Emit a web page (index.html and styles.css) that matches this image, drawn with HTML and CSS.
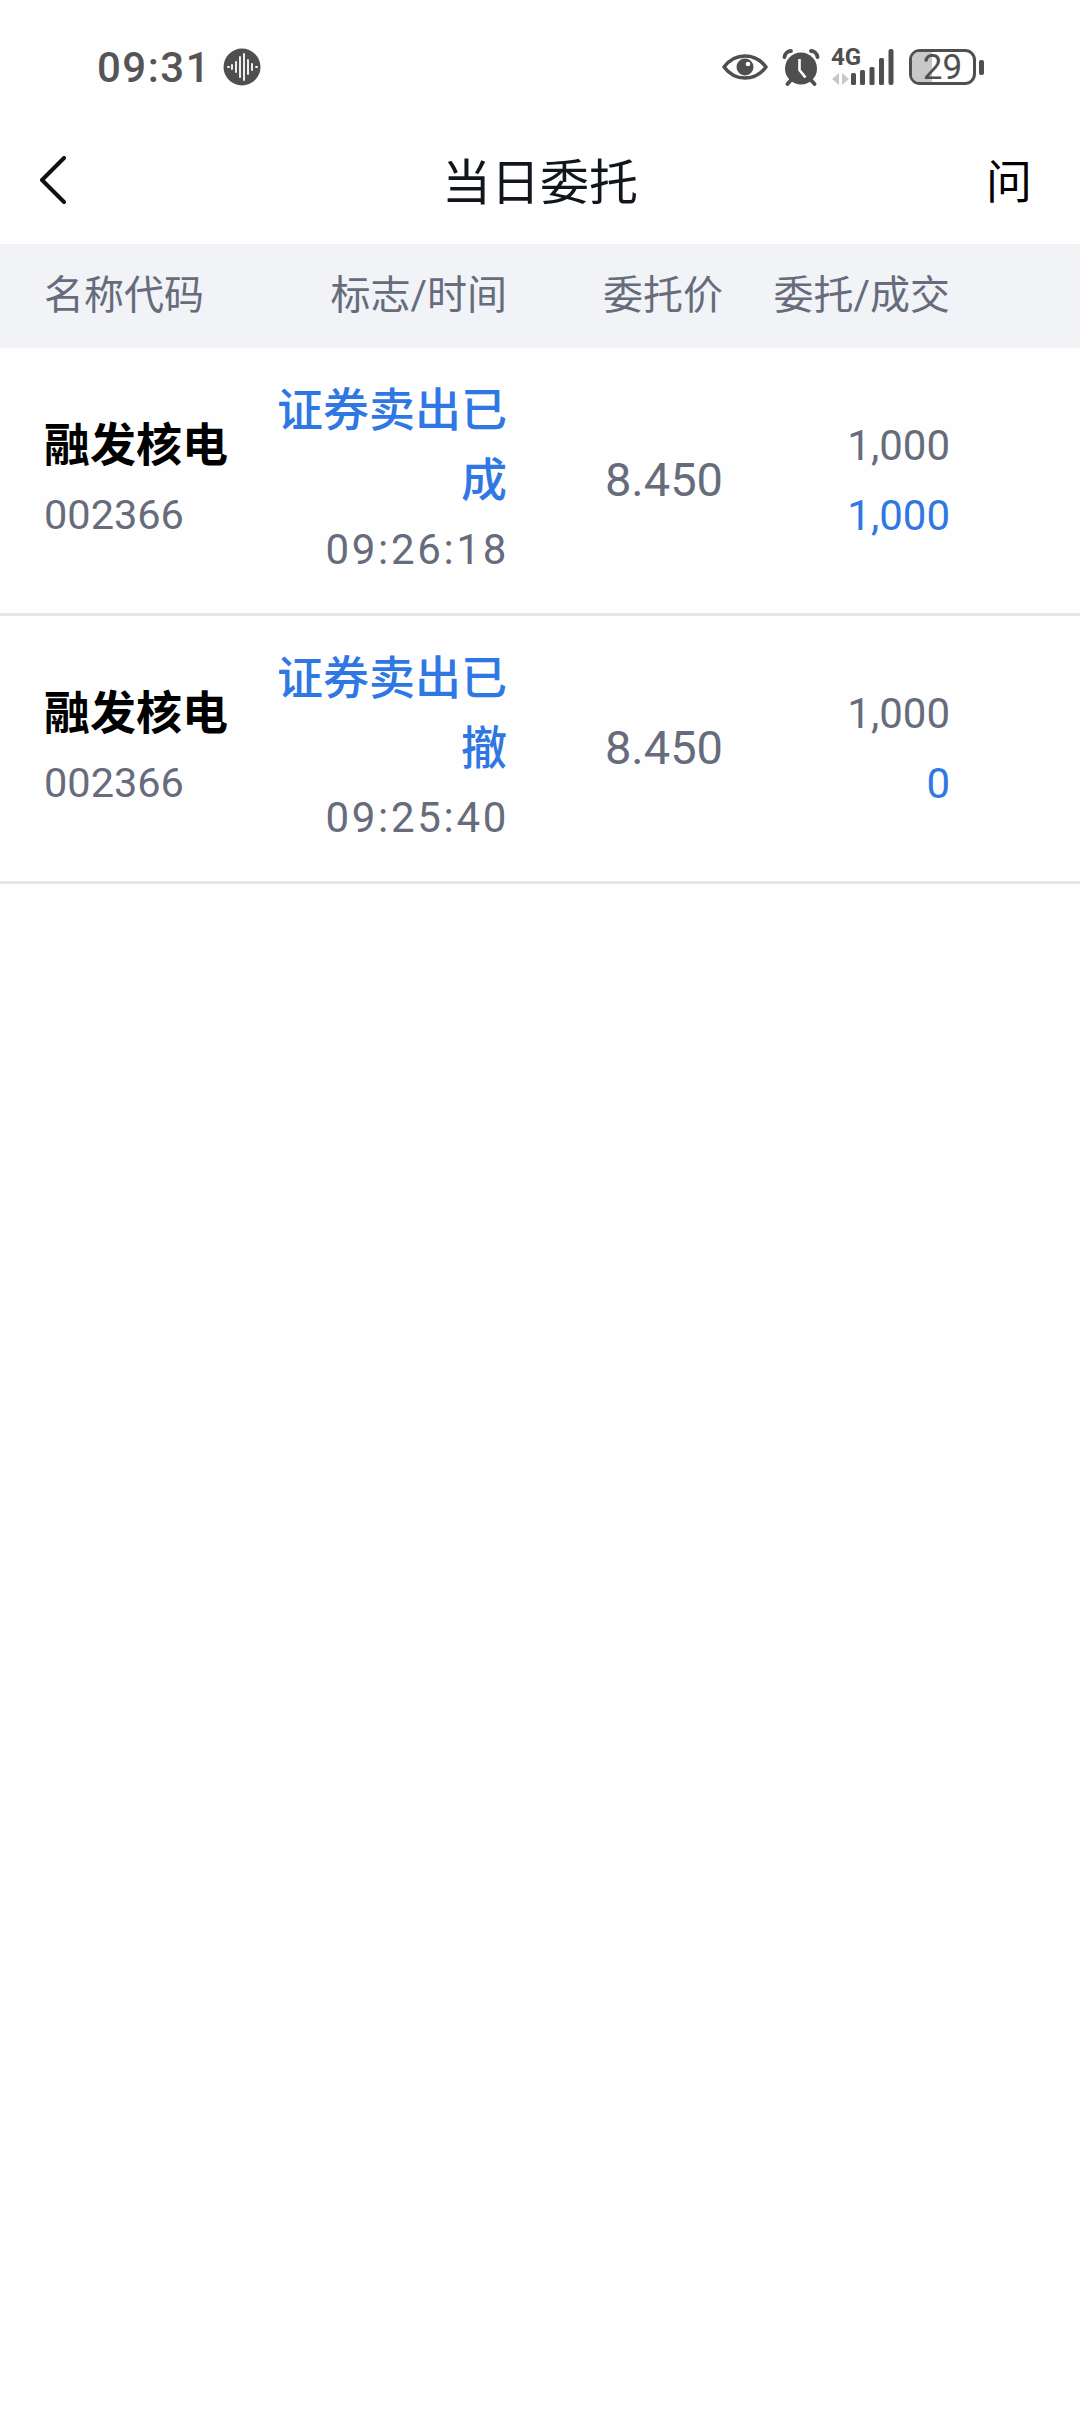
FILE: index.html
```html
<!DOCTYPE html>
<html>
	<head>
		<meta charset="UTF-8">
		<title>当日委托</title>
		<meta name="viewport" content="width=device-width,initial-scale=1">
		<link rel="stylesheet" href="styles.css">
	</head>
	<body>
		<div class="container">
			<!-- 状态栏 -->
			<div class="status">
				<div class="status-left">
					<span class="clock">09:31</span>
					<svg class="voice" width="38" height="38" viewBox="0 0 38 38">
						<circle cx="19" cy="19" r="18.5" fill="#4f4f4f"/>
						<path d="M5 19h1M9 17v4M13 14v10M17 9v20M21 6v26M25 12v14M29 16v6M33 19h1" stroke="#fff" stroke-width="1.8" stroke-linecap="round" fill="none"/>
					</svg>
				</div>
				<div class="status-right">
					<svg class="eye" width="46" height="26" viewBox="0 0 46 26">
						<path d="M2 13C8 5 15 2 23 2S38 5 44 13C38 21 31 24 23 24S8 21 2 13Z" fill="none" stroke="#4f4f4f" stroke-width="3.600" stroke-linejoin="round"/>
						<circle cx="23" cy="13" r="8.500" fill="#4f4f4f"/>
						<circle cx="26" cy="10" r="2.300" fill="#fff"/>
					</svg>
					<svg class="alarm" width="38" height="37" viewBox="0 0 38 37">
						<circle cx="19" cy="19.500" r="16" fill="#4f4f4f"/>
						<path d="M2.500 8C3 4.500 6 2 9 2M35.500 8C35 4.500 32 2 29 2M9 31l-3.500 4M29 31l3.500 4" stroke="#4f4f4f" stroke-width="3.800" stroke-linecap="round" fill="none"/>
						<path d="M17.500 10v11l6 7.500" stroke="#fff" stroke-width="2.600" fill="none"/>
					</svg>
					<svg class="signal" width="63" height="64" viewBox="0 -14 63 64">
						<text x="0" y="16" class="net">4G</text>
						<path d="M8 24v12l-7-6zM11 24v12l7-6z" fill="#c8c8c8"/>
						<rect x="20" y="24" width="5" height="12" rx="1.500" fill="#4f4f4f"/>
						<rect x="29" y="21" width="5" height="15" rx="1.500" fill="#4f4f4f"/>
						<rect x="38.500" y="18" width="5" height="18" rx="1.500" fill="#4f4f4f"/>
						<rect x="48" y="9" width="5" height="27" rx="1.500" fill="#4f4f4f"/>
						<rect x="57.500" y="0" width="5" height="36" rx="2" fill="#4f4f4f"/>
					</svg>
					<div class="battery">
						<div class="cell">
							<div class="level"></div>
							<span class="percent">29</span>
						</div>
						<div class="tip"></div>
					</div>
				</div>
			</div>

			<!-- 标题栏 -->
			<div class="nav">
				<svg class="back" width="30" height="48" viewBox="0 0 30 48">
					<path d="M26 2 4 24l22 22" fill="none" stroke="#111" stroke-width="4" stroke-linecap="round" stroke-linejoin="round"/>
				</svg>
				<h1 class="title">当日委托</h1>
				<span class="help">问</span>
			</div>

			<!-- 表头 -->
			<div class="table-head cols">
				<div>名称代码</div>
				<div class="right">标志/时间</div>
				<div class="right">委托价</div>
				<div class="right">委托/成交</div>
			</div>

			<!-- 委托列表 -->
			<ul class="list">
				<li class="row cols">
					<div>
						<div class="name">融发核电</div>
						<div class="code">002366</div>
					</div>
					<div class="right">
						<div class="flag">证券卖出已成</div>
						<div class="time">09:26:18</div>
					</div>
					<div class="right price">8.450</div>
					<div class="right qtys">
						<div class="qty">1,000</div>
						<div class="qty blue">1,000</div>
					</div>
				</li>
				<li class="row cols">
					<div>
						<div class="name">融发核电</div>
						<div class="code">002366</div>
					</div>
					<div class="right">
						<div class="flag">证券卖出已撤</div>
						<div class="time">09:25:40</div>
					</div>
					<div class="right price">8.450</div>
					<div class="right qtys">
						<div class="qty">1,000</div>
						<div class="qty blue">0</div>
					</div>
				</li>
			</ul>
		</div>
	</body>
</html>
```

FILE: styles.css
```css
*{
	padding:0;
	margin:0;
	box-sizing:border-box;
}
ul,li{
	list-style:none;
}
body{
	background:#fff;
	font-family:Roboto,"Noto Sans CJK SC",sans-serif;
	color:#666c7c;
}
.container{
	width:1080px;
	min-height:2412px;
	background:#fefefe;
}
.status{
	height:134px;
	padding:0 96px 0 97px;
	display:flex;
	justify-content:space-between;
	align-items:center;
	color:#555;
}
.status-left{
	display:flex;
	align-items:center;
	gap:12px;
}
.clock{
	font-size:42px;
	font-weight:500;
	letter-spacing:1.500px;
}
.status-right{
	display:flex;
	align-items:center;
	gap:14px;
}
.alarm{
	margin-right:-3px;
}
.net{
	font-family:Roboto,sans-serif;
	font-size:24px;
	font-weight:700;
	fill:#4f4f4f;
}
.battery{
	display:flex;
	align-items:center;
	gap:3px;
	margin-left:1px;
}
.cell{
	width:67px;
	height:36px;
	border:3.500px solid #4f4f4f;
	border-radius:11px;
	position:relative;
	display:flex;
	align-items:center;
	justify-content:center;
}
.level{
	position:absolute;
	left:0;
	top:0;
	bottom:0;
	width:20px;
	border-radius:7px 0 0 7px;
	background:#c8c8c8;
}
.percent{
	position:relative;
	font-size:35px;
	line-height:29px;
	color:#4f4f4f;
}
.tip{
	width:5px;
	height:15px;
	border-radius:2px;
	background:#4f4f4f;
}
.nav{
	height:110px;
	padding:0 48px 22px;
	display:grid;
	grid-template-columns:1fr auto 1fr;
	align-items:center;
	background:#fff;
}
.back{
	margin:4px 0 0 -10px;
}
.title{
	font-size:49px;
	font-weight:400;
	color:#11151c;
}
.help{
	justify-self:end;
	font-size:46px;
	color:#000;
}
.cols{
	display:grid;
	grid-template-columns:228px 235px 216px 227px;
	padding:0 130px 0 44px;
	align-items:center;
}
.right{
	text-align:right;
}
.table-head{
	height:104px;
	padding-bottom:8px;
	background:#f1f3f7;
	font-size:40px;
}
.row{
	height:268px;
	padding-bottom:2px;
	border-bottom:3px solid #e4e6ea;
}
.name{
	font-size:46px;
	font-weight:700;
	line-height:70px;
	color:#000;
}
.code{
	font-size:41.500px;
	line-height:70px;
}
.flag{
	font-size:46px;
	font-weight:500;
	line-height:70px;
	color:#2f78e4;
}
.time{
	font-size:42px;
	line-height:70px;
	letter-spacing:2.700px;
	margin-right:-2px;
}
.price{
	font-size:47px;
}
.qtys{
	padding-top:3px;
}
.qty{
	font-size:42px;
	line-height:70px;
}
.blue{
	color:#2f78e4;
}
```
